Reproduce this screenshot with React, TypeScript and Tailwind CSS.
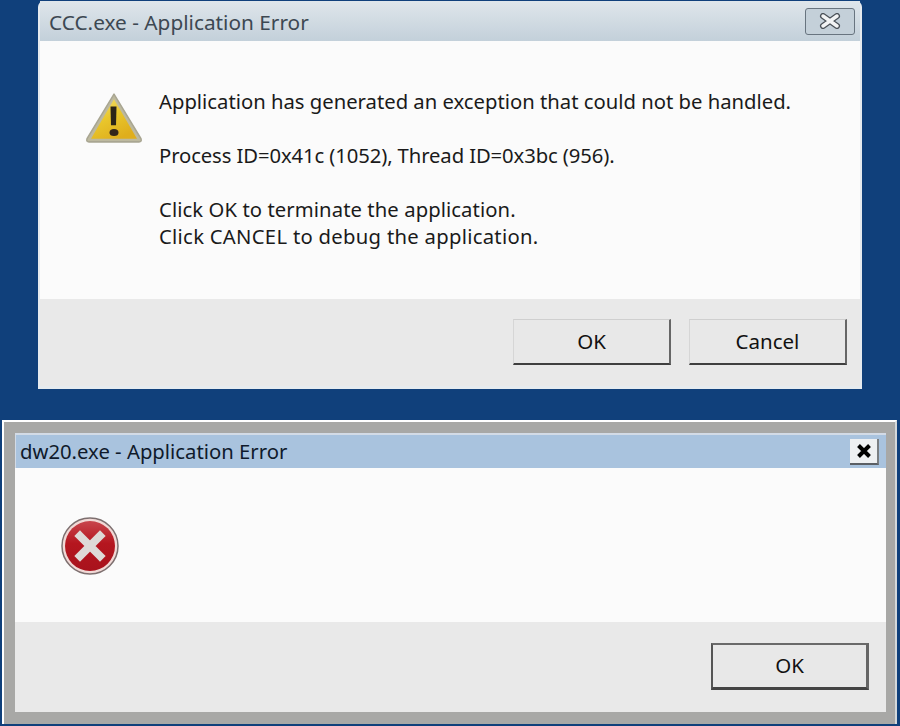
function WarningIcon() {
  return (
    <svg width="58" height="54" viewBox="0 0 58 52" preserveAspectRatio="none" className="mt-[3px] block shrink-0">
      <defs>
        <linearGradient id="warnFill" x1="0" y1="0" x2="0.6" y2="1">
          <stop offset="0" stopColor="#f3e27a" />
          <stop offset="0.5" stopColor="#e9c72c" />
          <stop offset="1" stopColor="#dfae1c" />
        </linearGradient>
      </defs>
      <path d="M29 3 L56 46 Q57 49 54 49 L4 49 Q1 49 2 46 Z" fill="#bdb99f" stroke="#a9a692" strokeWidth="1.5" strokeLinejoin="round" />
      <path d="M29 8 L52 46 L6 46 Z" fill="url(#warnFill)" />
      <path d="M25.5 15 L31.5 15 L31 33 L26 33 Z" fill="#2c2518" />
      <ellipse cx="29" cy="40" rx="4.5" ry="3.4" fill="#33261a" />
    </svg>
  )
}

function ErrorIcon() {
  return (
    <svg width="60" height="60" viewBox="0 0 60 60" className="block">
      <defs>
        <linearGradient id="errFill" x1="0" y1="0" x2="0" y2="1">
          <stop offset="0" stopColor="#c8454c" />
          <stop offset="0.45" stopColor="#b5161f" />
          <stop offset="1" stopColor="#a8121c" />
        </linearGradient>
      </defs>
      <circle cx="30" cy="30" r="28" fill="#f1d9d6" stroke="#7d6f6f" strokeWidth="1.5" />
      <circle cx="30" cy="30" r="25" fill="url(#errFill)" />
      <path d="M20 20 L40 40 M40 20 L20 40" stroke="#dedad7" strokeWidth="8" strokeLinecap="square" />
    </svg>
  )
}

function Button({ label, className }: { label: string; className: string }) {
  return (
    <button type="button" className={"flex items-center justify-center bg-[#e8e8e8] text-[20.5px] text-[#111] " + className}>
      {label}
    </button>
  )
}

export default function App() {
  return (
    <div className="flex h-[726px] w-[900px] flex-col overflow-hidden bg-[#10407b] font-['Noto_Sans','Open_Sans',sans-serif]">
      {/* Dialogo de cima */}
      <div className="ml-[38px] mt-[1px] flex h-[388px] w-[824px] flex-col rounded-t-[6px] bg-[#e6ebef] px-[2px] pb-[3px]">
        <div className="flex h-[40px] shrink-0 items-center justify-between bg-gradient-to-b from-[#dfe6eb] to-[#c3d0da] pl-[9px] pr-[5px] pt-[3px]">
          <span className="text-[20.8px] text-[#3d4852]">CCC.exe - Application Error</span>
          <div className="-mt-[3px] flex h-[27px] w-[50px] items-center justify-center rounded-[3px] border border-[#68747f] bg-[#c4d0d9]">
            <svg width="22" height="16" viewBox="0 0 22 16">
              <path d="M4 3 L18 13 M18 3 L4 13" stroke="#4a5158" strokeWidth="6" strokeLinecap="round" />
              <path d="M4 3 L18 13 M18 3 L4 13" stroke="#f2f4f5" strokeWidth="3.5" strokeLinecap="round" />
            </svg>
          </div>
        </div>
        <div className="flex h-[258px] shrink-0 items-start bg-[#fbfbfb] pl-[45px] pt-[47px]">
          <WarningIcon />
          <div className="ml-[16px] text-[20.25px] leading-[27px] text-[#1a1a1a]">
            <p>Application has generated an exception that could not be handled.</p>
            <p className="mt-[27px] tracking-[-0.1px]">Process ID=0x41c (1052), Thread ID=0x3bc (956).</p>
            <p className="mt-[27px] tracking-[0.08px]">Click OK to terminate the application.</p>
            <p className="tracking-[0.29px]">Click CANCEL to debug the application.</p>
          </div>
        </div>
        <div className="flex flex-1 items-start justify-end gap-[18px] bg-[#e9e9e9] pr-[13px] pt-[20px]">
          <Button label="OK" className="h-[46px] w-[158px] border-b-2 border-r-2 border-t border-l border-b-[#3f3f3f] border-r-[#666] border-t-[#cfcfcf] border-l-[#d6d6d6]" />
          <Button label="Cancel" className="h-[46px] w-[158px] border-b-2 border-r-2 border-t border-l border-b-[#3f3f3f] border-r-[#666] border-t-[#cfcfcf] border-l-[#d6d6d6]" />
        </div>
      </div>

      {/* Dialogo de baixo */}
      <div className="ml-[2px] mt-[31px] flex h-[304px] w-[895px] flex-col border-l-[2px] border-r-[2px] border-t-[2px] border-l-white border-r-[#d4d8da] border-t-white bg-[#a8a8a6] pb-[12px] pl-[11px] pr-[9px] pt-[11px]">
        <div className="flex h-[35px] shrink-0 items-center justify-between border-l border-t-[2px] border-[#d3dbe6] bg-[#a9c3de] pl-[4px] pr-[7px]">
          <span className="text-[20.3px] text-[#0f1a2b]">dw20.exe - Application Error</span>
          <div className="flex h-[26px] w-[29px] items-center justify-center border-b-2 border-r-2 border-b-[#5b5f64] border-r-[#7a7e82] bg-[#eef0f2]">
            <svg width="16" height="16" viewBox="0 0 16 16">
              <path d="M2.5 2.5 L13.5 13.5 M13.5 2.5 L2.5 13.5" stroke="#000" strokeWidth="4" />
            </svg>
          </div>
        </div>
        <div className="flex h-[154px] shrink-0 items-start bg-[#fbfbfb] pl-[45px] pt-[48px]">
          <ErrorIcon />
        </div>
        <div className="flex flex-1 items-start justify-end bg-[#e9e9e9] pr-[17px] pt-[21px]">
          <Button label="OK" className="h-[47px] w-[158px] border-2 border-b-[3px] border-r-[3px] border-t-[#6a6a6a] border-l-[#555] border-b-[#444] border-r-[#666] pb-[2px]" />
        </div>
      </div>
    </div>
  )
}
